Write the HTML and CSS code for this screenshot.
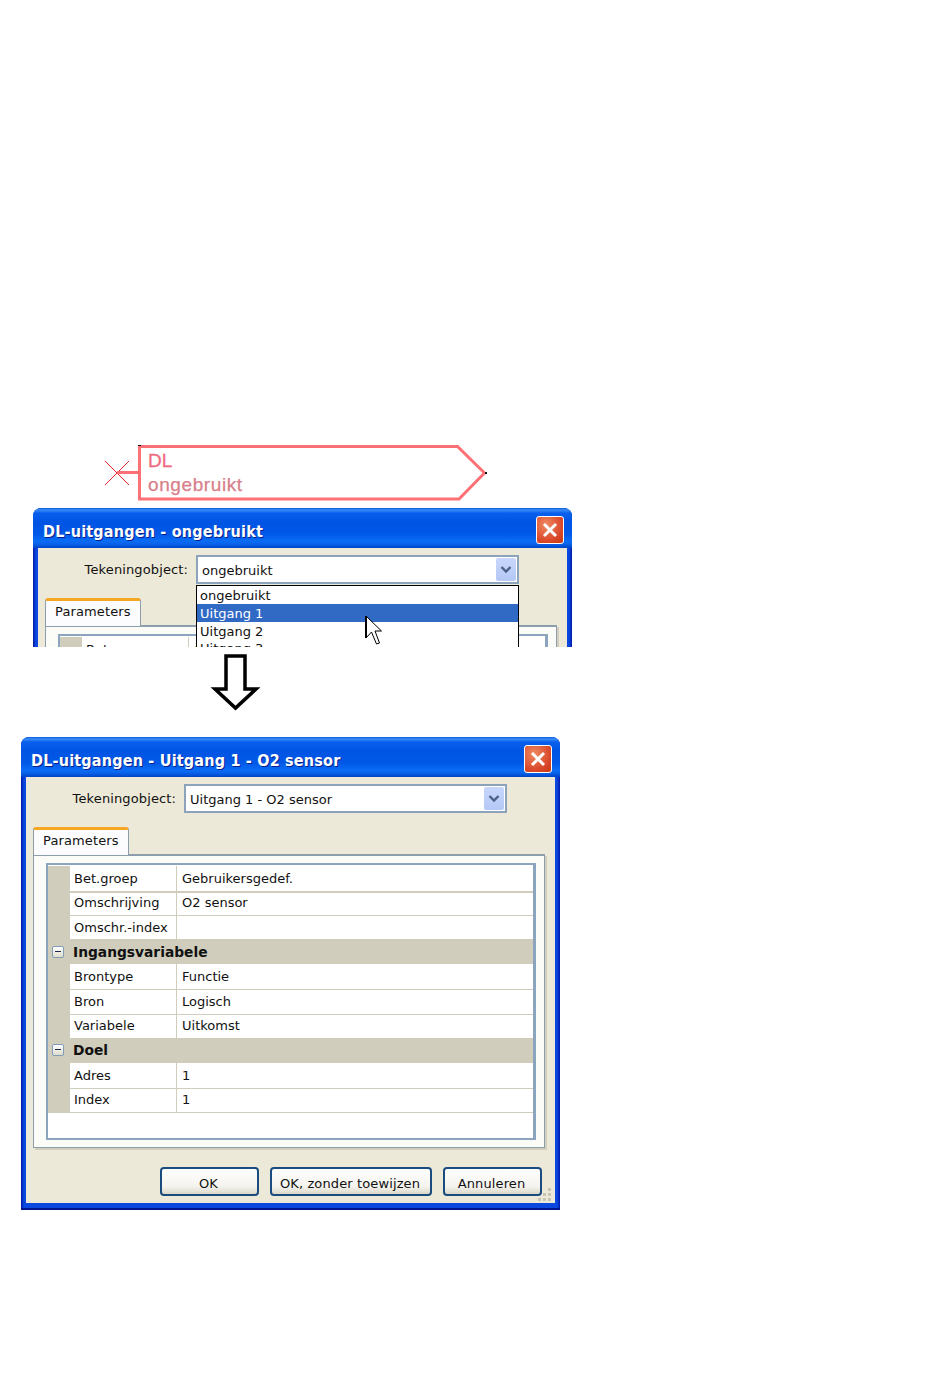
FILE: index.html
```html
<!DOCTYPE html>
<html lang="nl">
<head>
<meta charset="utf-8">
<title>DL-uitgangen</title>
<link rel="stylesheet" href="styles.css">
</head>
<body>
<main class="page">
  <svg class="node" width="400" height="63" viewBox="100 445 400 63" aria-label="DL ongebruikt">
    <path class="node-x" d="M105 461 L129 485 M129 461 L105 485"/>
    <path class="node-line" d="M117 472.500 H139 M139.500 446.500 H457.500 L484.500 473 L459 499 H139.500 Z"/>
    <rect class="node-dot" x="138" y="445" width="3" height="1"/>
    <rect class="node-dot" x="485" y="472" width="2" height="2"/>
    <text class="node-title" x="148" y="467">DL</text>
    <text class="node-sub" x="148" y="491">ongebruikt</text>
  </svg>

  <div class="clip">
    <section class="dialog dialog-first">
      <header class="titlebar">
        <h2 class="title">DL-uitgangen - ongebruikt</h2>
        <span class="close"><svg width="20" height="20" viewBox="0 0 20 20"><path d="M4 4 L16 16 M16 4 L4 16"/></svg></span>
      </header>
      <div class="body">
        <div class="form-row">
          <span class="form-label">Tekeningobject:</span>
          <div class="select">
            <span class="select-value">ongebruikt</span>
            <span class="select-btn"><svg width="12" height="10" viewBox="0 0 12 10"><path d="M1.500 2 L6 6.500 L10.500 2"/></svg></span>
            <ul class="dropdown">
              <li>ongebruikt</li>
              <li class="selected">Uitgang 1</li>
              <li>Uitgang 2</li>
              <li>Uitgang 3</li>
            </ul>
          </div>
        </div>
        <div class="tab">Parameters</div>
        <div class="panel">
          <div class="grid">
            <div class="row row-first"><span class="gutter"></span><span class="name">Bet.groep</span><span class="value">Gebruikersgedef.</span></div>
          </div>
        </div>
      </div>
    </section>
    <svg class="cursor" width="18" height="31" viewBox="0 0 18 31"><path d="M1 1 V23 L6.500 17 L11.500 29 L14.500 28 L10 16 H16.500 Z"/><path class="cursor-edge" d="M1 1 V23"/></svg>
  </div>

  <svg class="down-arrow" width="52" height="60" viewBox="0 0 52 60"><path d="M16 3 H35 V36 H46 L25.500 55 L5 36 H16 Z"/></svg>

  <section class="dialog dialog-second">
    <header class="titlebar">
      <h2 class="title">DL-uitgangen - Uitgang 1 - O2 sensor</h2>
      <span class="close"><svg width="20" height="20" viewBox="0 0 20 20"><path d="M4 4 L16 16 M16 4 L4 16"/></svg></span>
    </header>
    <div class="body">
      <div class="form-row">
        <span class="form-label">Tekeningobject:</span>
        <div class="select">
          <span class="select-value">Uitgang 1 - O2 sensor</span>
          <span class="select-btn"><svg width="12" height="10" viewBox="0 0 12 10"><path d="M1.500 2 L6 6.500 L10.500 2"/></svg></span>
        </div>
      </div>
      <div class="tab">Parameters</div>
      <div class="panel">
        <div class="grid">
          <div class="row row-first"><span class="gutter"></span><span class="name">Bet.groep</span><span class="value">Gebruikersgedef.</span></div>
          <div class="row"><span class="gutter"></span><span class="name">Omschrijving</span><span class="value">O2 sensor</span></div>
          <div class="row"><span class="gutter"></span><span class="name">Omschr.-index</span><span class="value"></span></div>
          <div class="group"><span class="toggle"></span><span class="group-label">Ingangsvariabele</span></div>
          <div class="row"><span class="gutter"></span><span class="name">Brontype</span><span class="value">Functie</span></div>
          <div class="row"><span class="gutter"></span><span class="name">Bron</span><span class="value">Logisch</span></div>
          <div class="row"><span class="gutter"></span><span class="name">Variabele</span><span class="value">Uitkomst</span></div>
          <div class="group"><span class="toggle"></span><span class="group-label">Doel</span></div>
          <div class="row"><span class="gutter"></span><span class="name">Adres</span><span class="value">1</span></div>
          <div class="row"><span class="gutter"></span><span class="name">Index</span><span class="value">1</span></div>
        </div>
      </div>
      <div class="actions">
        <button class="btn btn-small" type="button">OK</button>
        <button class="btn btn-wide" type="button">OK, zonder toewijzen</button>
        <button class="btn btn-small" type="button">Annuleren</button>
      </div>
      <svg class="grip" width="16" height="16" viewBox="0 0 16 16"><path d="M11 1h3v3h-3z M6 6h3v3H6z M11 6h3v3h-3z M1 11h3v3H1z M6 11h3v3H6z M11 11h3v3h-3z"/></svg>
    </div>
  </section>
</main>
</body>
</html>
```
FILE: styles.css
```css
* { box-sizing: border-box; }
html, body { margin: 0; padding: 0; background: #fff; }
body { font-family: "DejaVu Sans", "Liberation Sans", sans-serif; font-size: 13px; letter-spacing: .12px; color: #111; }
.page { width: 950px; height: 1397px; padding-top: 445px; overflow: hidden; }

/* diagram node */
.node { display: block; margin-left: 100px; }
.node-x { fill: none; stroke: #f0262e; stroke-width: 1; }
.node-line { fill: none; stroke: #fd7076; stroke-width: 3; }
.node-dot { fill: #111; }
.node-title { font-family: "Liberation Sans", sans-serif; font-size: 19px; fill: #ee6a80; stroke: #ee6a80; stroke-width: .3; }
.node-sub { font-family: "Liberation Sans", sans-serif; font-size: 19px; letter-spacing: .6px; fill: #d8808a; stroke: #d8808a; stroke-width: .25; }

/* clipped first dialog */
.clip { position: relative; width: 539px; height: 139px; margin-left: 33px; overflow: hidden; }
.cursor { position: absolute; left: 332px; top: 107px; z-index: 3; }
.cursor path { fill: #fff; stroke: #000; stroke-width: 1; }
.cursor .cursor-edge { fill: none; stroke-width: 2; }

/* arrow */
.down-arrow { display: block; margin: 6px 0 0 210px; }
.down-arrow path { fill: #fff; stroke: #000; stroke-width: 3.500; }

/* dialog window */
.dialog { display: flex; flex-direction: column; width: 539px; height: 473px; padding: 0 5px 7px; border-radius: 8px 8px 0 0; background: linear-gradient(90deg, #0019a8 0, #0a48e0 3px, #0a48e0 calc(100% - 3px), #0019a8 100%); }
.dialog-second { margin: 24px 0 0 21px; box-shadow: inset 0 -2px #00148c; }
.titlebar { display: flex; align-items: center; justify-content: space-between; flex: none; height: 40px; margin: 0 -5px; padding: 4px 8px 0 10px; border-radius: 8px 8px 0 0; background: linear-gradient(180deg, #0a5ce0 0, #3a8cf6 2px, #0a60ee 5px, #0054e3 14px, #0058e8 26px, #0a6cf4 33px, #0a62ea 36px, #0044c8 40px); }
.title { margin: 2px 0 0; font-family: "DejaVu Sans", sans-serif; font-size: 16px; font-stretch: condensed; font-weight: 700; letter-spacing: .2px; color: #fff; text-shadow: 1px 1px 0 #0a1f8f; white-space: nowrap; }
.close { display: flex; align-items: center; justify-content: center; width: 28px; height: 28px; border: 1px solid #fff; border-radius: 3px; background: radial-gradient(circle at 35% 30%, #ef8a62, #d9482a 65%, #c53a12); }
.close svg path { fill: none; stroke: #fff; stroke-width: 3; }

.body { position: relative; flex: 1; min-height: 0; background: #ece9d8; }
.form-row { display: flex; align-items: center; gap: 8px; padding-top: 7px; }
.form-label { width: 150px; text-align: right; }
.select { position: relative; display: flex; align-items: center; justify-content: space-between; width: 323px; height: 29px; padding: 0 1px 0 4px; border: 2px solid #8da2bb; background: #fff; letter-spacing: 0; }
.select-value { padding-top: 1px; }
.select-btn { display: flex; align-items: center; justify-content: center; width: 20px; height: 23px; border-radius: 2px; background: linear-gradient(180deg, #c8d6fb, #b4c8f6); }
.select-btn path { fill: none; stroke: #4d6185; stroke-width: 2.400; }
.dropdown { position: absolute; top: 28px; left: -2px; right: -2px; margin: 0; padding: 0; list-style: none; border: 1px solid #000; background: #fff; z-index: 2; }
.dropdown li { height: 17.800px; padding-left: 3px; line-height: 20px; }
.dropdown .selected { background: #316ac5; color: #fff; }

/* tab and panel */
.tab { width: 96px; height: 28px; margin: 14px 0 0 7px; padding: 3px 0 0 9px; border: 1px solid #8c9dab; border-top: 3px solid #f5a623; border-bottom: 0; border-radius: 3px 3px 0 0; background: #fcfcfe; position: relative; z-index: 1; }
.panel { width: 512px; height: 294px; margin: -1px 0 0 7px; padding: 7px 9px 0 12px; border: 1px solid #8c9dab; border-top-width: 2px; background: #fbfbf8; box-shadow: 2px 2px 0 #d2cfbe; }
.grid { width: 490px; height: 277px; padding-top: .5px; border: 2px solid #8aa5bd; border-right-width: 3px; background: #fff; letter-spacing: 0; }
.row { display: grid; grid-template-columns: 22px 107px 1fr; height: 24.650px; line-height: 25px; }
.gutter { background: #d0cdbc; }
.name { padding-left: 4px; border-right: 1px solid #d0cdbc; border-bottom: 1px solid #d0cdbc; white-space: nowrap; }
.value { padding-left: 5px; border-bottom: 1px solid #d0cdbc; white-space: nowrap; }
.row-first .name, .row-first .value { border-bottom-width: 2px; }
.group { display: flex; align-items: center; gap: 9px; height: 24.650px; padding-left: 4px; background: #d0cdbc; }
.toggle { position: relative; width: 12px; height: 12px; border: 1px solid #7f9db9; border-radius: 2px; background: linear-gradient(180deg, #fff, #e0dccb); }
.toggle::after { content: ""; position: absolute; left: 2px; top: 4px; width: 6px; height: 1px; background: #1a2a4a; }
.group-label { font-size: 13.800px; font-weight: 700; }

/* footer buttons */
.actions { display: flex; justify-content: flex-end; gap: 11px; margin-top: 19px; padding-right: 13px; }
.btn { height: 29px; padding: 3px 2px 0 0; border: 2px solid #1a4c80; border-radius: 4px; font: inherit; letter-spacing: inherit; color: #111; background: linear-gradient(180deg, #fff, #f4f3ee 70%, #dcd8c8); }
.btn-small { width: 99px; }
.btn-wide { width: 162px; }
.grip { position: absolute; right: 2px; bottom: 0; fill: #c8c5b4; }
```
